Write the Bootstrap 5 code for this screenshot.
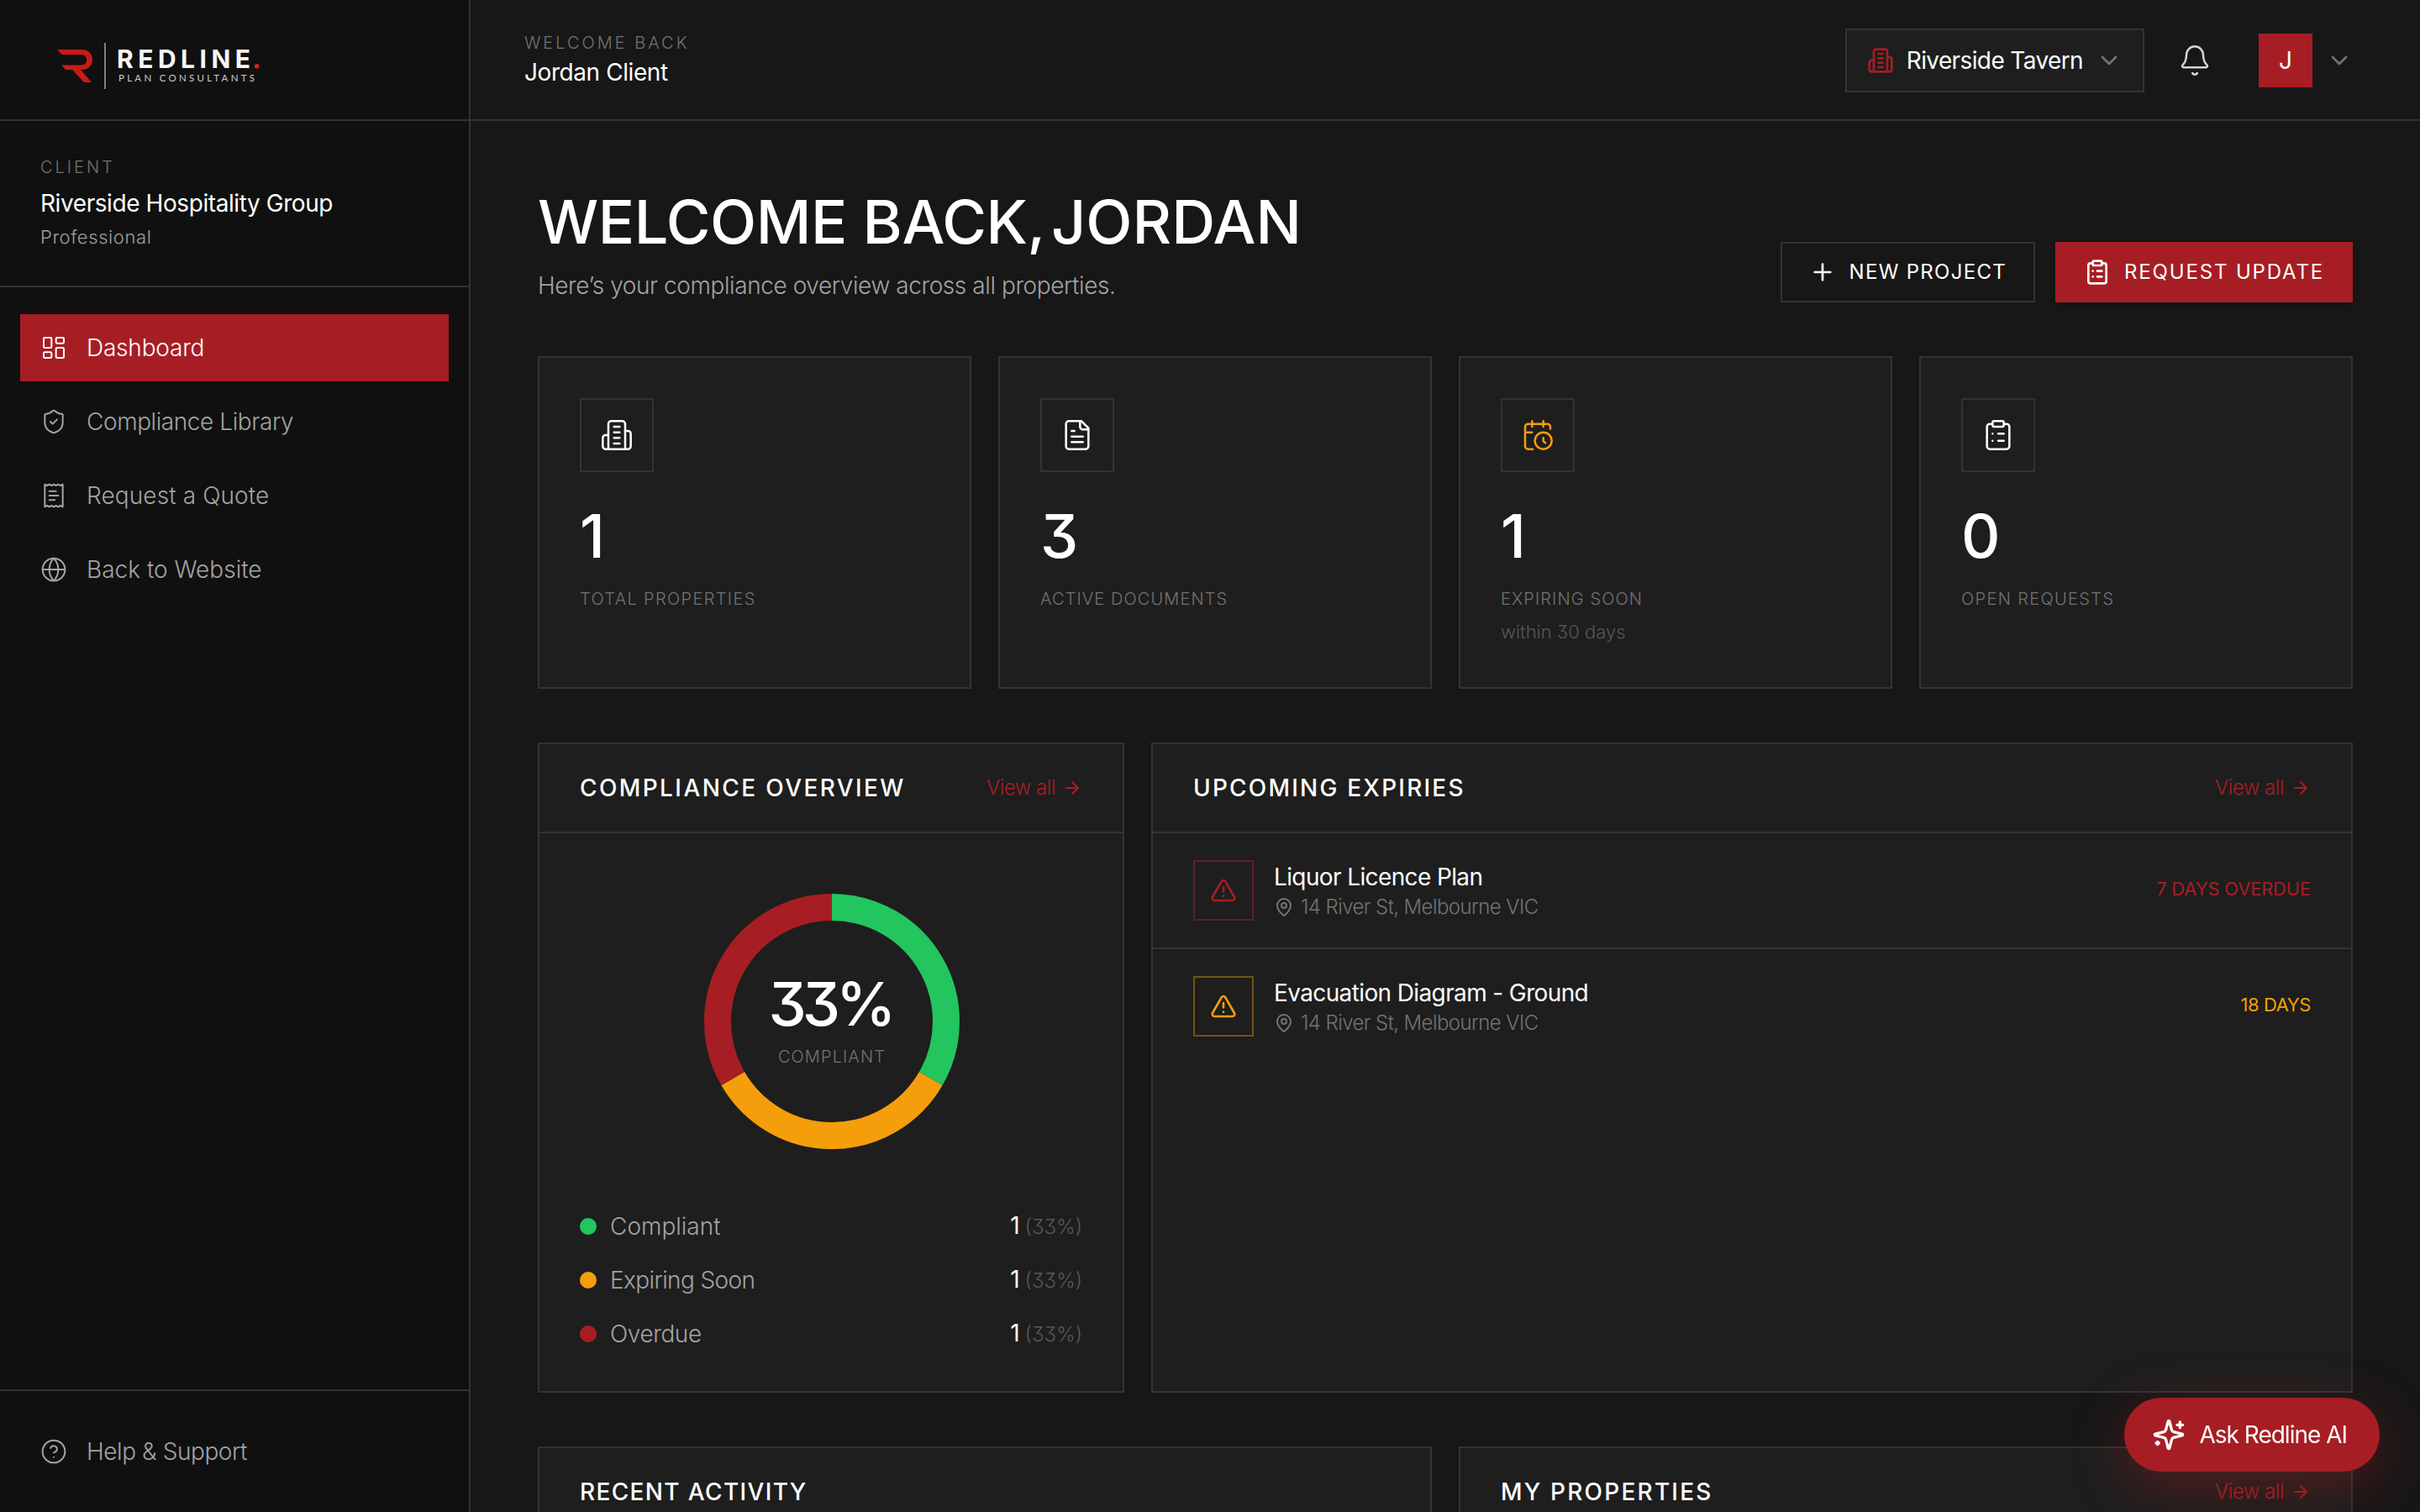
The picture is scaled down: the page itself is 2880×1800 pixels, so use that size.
<!DOCTYPE html>
<html lang="en">
<head>
    <meta charset="UTF-8">
    <meta name="viewport" content="width=device-width, initial-scale=1.0">
    <title>Redline Plan Consultants - Dashboard</title>
    <link href="https://cdn.jsdelivr.net/npm/bootstrap@5.3.0/dist/css/bootstrap.min.css" rel="stylesheet">
    <style>
        :root {
            --red: #a61e24;
            --amber: #f59e0b;
            --green: #22c55e;
            --line: #333;
            --panel: #1e1e1e;
        }
        body {
            background: #171717;
            color: #fff;
            font-family: Inter, "Open Sans", sans-serif;
            font-feature-settings: "cv09";
            font-size: 28px;
            line-height: 40px;
            font-weight: 300;
            overflow: hidden;
        }
        .app { height: 1800px; }
        svg.ico {
            width: 32px; height: 32px; flex: none;
            fill: none; stroke: currentColor; stroke-width: 1.5;
            stroke-linecap: round; stroke-linejoin: round;
        }
        svg.ico-lg { width: 40px; height: 40px; }
        svg.ico-sm { width: 24px; height: 24px; }
        svg.bold { stroke-width: 2; }
        .c-red { color: var(--red); }
        .c-amber { color: var(--amber); }
        .c-dim { color: #737373; }

        /* tracking */
        .tk-a { letter-spacing: -.62px; }
        .tk-b { letter-spacing: -.42px; }
        .tk-c { letter-spacing: -.2px; }
        .tk-d { letter-spacing: .1px; }
        .tk-e { letter-spacing: .6px; }
        .tk-f { letter-spacing: 1.1px; }
        .tk-g { letter-spacing: 1.35px; }
        .tk-h { letter-spacing: 1.83px; }
        .tk-i { letter-spacing: 2.2px; }
        .tk-j { letter-spacing: 2.4px; }

        .sidebar { width: 560px; flex: none; background: #101010; border-right: 2px solid var(--line); }
        .brand { height: 144px; padding: 0 48px; border-bottom: 2px solid var(--line); }
        .client { padding: 40px 48px; border-bottom: 2px solid var(--line); }
        .eyebrow { font-size: 20px; line-height: 30px; letter-spacing: 3px; color: #737373; text-transform: uppercase; }
        .client-plan { font-size: 22px; line-height: 36px; color: #a0a0a0; margin-top: 2px; }
        .side-nav { padding: 32px 24px; gap: 8px; }
        .side-link { height: 80px; padding: 0 24px; gap: 23px; color: #a3a3a3; text-decoration: none; }
        .side-link.active { background: var(--red); color: #fff; }
        .side-foot { padding: 32px 24px; border-top: 2px solid var(--line); }

        .topbar { height: 144px; padding: 0 80px 0 64px; border-bottom: 2px solid var(--line); }
        .top-tools { padding-top: 2px; }
        .site-select { height: 76px; padding: 0 24px; gap: 15px; background: var(--panel); border: 2px solid var(--line); }
        .bell { margin: 0 56px 0 40px; color: #d4d4d4; }
        .avatar { width: 64px; height: 64px; background: var(--red); }

        .content { padding: 80px 80px 0; }
        .disp { font-weight: 500; color: #fff; }
        .page-title { font-size: 72px; line-height: 80px; letter-spacing: -.5px; }
        .page-title span { margin-left: -11px; letter-spacing: 0; }
        .page-sub { margin-top: 16px; color: #a3a3a3; }
        .act { height: 72px; padding: 0 32px; gap: 16px; font-size: 24px; border: 2px solid var(--line); border-radius: 0; color: #fff; font-weight: 400; text-transform: uppercase; }
        .act-red { background: var(--red); border-color: var(--red); box-shadow: 0 2px 6px rgba(0, 0, 0, .3); }
        .act .tk-n { letter-spacing: 1.3px; }

        .grid-row { --bs-gutter-x: 32px; margin-top: 64px; }
        .col-overview { flex: 0 0 730px; }
        .panel { background: var(--panel); border: 2px solid var(--line); }
        .stat { padding: 48px; height: 396px; }
        .stat-ico { width: 88px; height: 88px; border: 2px solid var(--line); }
        .stat-num { font-size: 72px; line-height: 72px; margin-top: 40px; }
        .stat-label { font-size: 20px; line-height: 30px; margin-top: 24px; color: #737373; text-transform: uppercase; }
        .stat-note { font-size: 22px; line-height: 36px; margin-top: 6px; color: #575757; }
        .panel-head { height: 106px; padding: 0 48px; border-bottom: 2px solid var(--line); }
        .panel-title { font-size: 28px; line-height: 40px; text-transform: uppercase; }
        .view-all { font-size: 24px; gap: 8px; color: var(--red); text-decoration: none; letter-spacing: -.5px; }
        .mid-panel { height: 774px; }

        .donut { width: 320px; height: 320px; margin: 64px 186px 64px 188px; position: relative; }
        .donut-text { position: absolute; inset: 0; }
        .donut-text .stat-num { letter-spacing: -5px; padding-right: 4px; }
        .donut-text .stat-label { margin-top: 12px; }
        .legend-list { padding: 0 48px; gap: 24px; color: #a3a3a3; }
        .legend-list > div { height: 40px; }
        .dot { width: 20px; height: 20px; border-radius: 50%; }
        .pct { font-size: 24px; color: #575757; margin-left: -2px; }

        .expiry { padding: 32px 48px; gap: 24px; height: 136px; }
        .expiry + .expiry { border-top: 2px solid var(--line); height: 138px; }
        .expiry-ico { width: 72px; height: 72px; border: 2px solid; }
        .is-over { color: var(--red); border-color: rgba(166, 30, 36, .5); }
        .is-soon { color: var(--amber); border-color: rgba(245, 158, 11, .4); }
        .expiry-addr { font-size: 24px; line-height: 32px; gap: 8px; color: #737373; letter-spacing: -.58px; }
        .expiry-due { font-size: 22px; font-weight: 400; text-transform: uppercase; padding-bottom: 4px; }

        .ask-btn {
            position: fixed; right: 48px; bottom: 48px; height: 88px; padding: 0 38px 0 32px; gap: 16px;
            border-radius: 44px; background: var(--red); color: #fff; font-size: 28px; line-height: 40px; font-weight: 400;
            letter-spacing: -1px;
            box-shadow: 0 16px 64px rgba(166, 30, 36, .4);
        }
    </style>
</head>
<body>
    <!-- icon set -->
    <svg class="d-none">
        <symbol id="i-dash" viewBox="0 0 24 24"><rect x="3" y="3" width="7" height="9" rx="1"/><rect x="14" y="3" width="7" height="5" rx="1"/><rect x="14" y="12" width="7" height="9" rx="1"/><rect x="3" y="16" width="7" height="5" rx="1"/></symbol>
        <symbol id="i-shield" viewBox="0 0 24 24"><path d="M20 13c0 5-3.5 7.5-7.66 8.95a1 1 0 0 1-.67-.01C7.5 20.5 4 18 4 13V6a1 1 0 0 1 1-1c2 0 4.5-1.2 6.24-2.72a1.17 1.17 0 0 1 1.52 0C14.51 3.81 17 5 19 5a1 1 0 0 1 1 1z"/><path d="m9 12 2 2 4-4"/></symbol>
        <symbol id="i-receipt" viewBox="0 0 24 24"><path d="M4 2v20l2-1 2 1 2-1 2 1 2-1 2 1 2-1 2 1V2l-2 1-2-1-2 1-2-1-2 1-2-1-2 1Z"/><path d="M14 8H8M16 12H8M13 16H8"/></symbol>
        <symbol id="i-globe" viewBox="0 0 24 24"><circle cx="12" cy="12" r="10"/><path d="M12 2a14.5 14.5 0 0 0 0 20 14.5 14.5 0 0 0 0-20M2 12h20"/></symbol>
        <symbol id="i-help" viewBox="0 0 24 24"><circle cx="12" cy="12" r="10"/><path d="M9.09 9a3 3 0 0 1 5.83 1c0 2-3 3-3 3M12 17h.01"/></symbol>
        <symbol id="i-building" viewBox="0 0 24 24"><path d="M6 22V4a2 2 0 0 1 2-2h8a2 2 0 0 1 2 2v18Z"/><path d="M6 12H4a2 2 0 0 0-2 2v6a2 2 0 0 0 2 2h2M18 9h2a2 2 0 0 1 2 2v9a2 2 0 0 1-2 2h-2M10 6h4M10 10h4M10 14h4M10 18h4"/></symbol>
        <symbol id="i-file" viewBox="0 0 24 24"><path d="M15 2H6a2 2 0 0 0-2 2v16a2 2 0 0 0 2 2h12a2 2 0 0 0 2-2V7Z"/><path d="M14 2v4a2 2 0 0 0 2 2h4M10 9H8M16 13H8M16 17H8"/></symbol>
        <symbol id="i-calclock" viewBox="0 0 24 24"><path d="M21 7.5V6a2 2 0 0 0-2-2H5a2 2 0 0 0-2 2v14a2 2 0 0 0 2 2h3.5M16 2v4M8 2v4M3 10h5M17.5 17.5 16 16.3V14"/><circle cx="16" cy="16" r="6"/></symbol>
        <symbol id="i-clip" viewBox="0 0 24 24"><rect x="8" y="2" width="8" height="4" rx="1"/><path d="M16 4h2a2 2 0 0 1 2 2v14a2 2 0 0 1-2 2H6a2 2 0 0 1-2-2V6a2 2 0 0 1 2-2h2M12 11h4M12 16h4M8 11h.01M8 16h.01"/></symbol>
        <symbol id="i-bell" viewBox="0 0 24 24"><path d="M10.268 21a2 2 0 0 0 3.464 0M3.262 15.326A1 1 0 0 0 4 17h16a1 1 0 0 0 .74-1.673C19.41 13.956 18 12.499 18 8A6 6 0 0 0 6 8c0 4.499-1.411 5.956-2.738 7.326"/></symbol>
        <symbol id="i-down" viewBox="0 0 24 24"><path d="m6 9 6 6 6-6"/></symbol>
        <symbol id="i-plus" viewBox="0 0 24 24"><path d="M5 12h14M12 5v14"/></symbol>
        <symbol id="i-arrow" viewBox="0 0 24 24"><path d="M5 12h14M12 5l7 7-7 7"/></symbol>
        <symbol id="i-alert" viewBox="0 0 24 24"><path d="m21.73 18-8-14a2 2 0 0 0-3.48 0l-8 14A2 2 0 0 0 4 21h16a2 2 0 0 0 1.73-3M12 9v4M12 17h.01"/></symbol>
        <symbol id="i-pin" viewBox="0 0 24 24"><path d="M20 10c0 4.993-5.539 10.193-7.399 11.799a1 1 0 0 1-1.202 0C9.539 20.193 4 14.993 4 10a8 8 0 0 1 16 0"/><circle cx="12" cy="10" r="3"/></symbol>
        <symbol id="i-spark" viewBox="0 0 24 24"><path d="M9.937 15.5A2 2 0 0 0 8.5 14.063l-6.135-1.582a.5.5 0 0 1 0-.962L8.5 9.936A2 2 0 0 0 9.937 8.5l1.582-6.135a.5.5 0 0 1 .963 0L14.063 8.5A2 2 0 0 0 15.5 9.937l6.135 1.581a.5.5 0 0 1 0 .964L15.5 14.063a2 2 0 0 0-1.437 1.437l-1.582 6.135a.5.5 0 0 1-.963 0zM20 3v4M22 5h-4M4 17v2M5 18H3"/></symbol>
    </svg>

    <div class="app d-flex">
        <aside class="sidebar d-flex flex-column">
            <div class="brand d-flex align-items-center">
                <svg width="280" height="80" viewBox="0 0 280 80">
                    <path fill="#cc1a17" d="M20 28h30a12 12 0 0 1 0 24H30l-5-5.500h24a6.200 6.200 0 0 0 0-12.500H26z"/>
                    <path fill="#cc1a17" d="M38 52h10l13 15h-9z"/>
                    <path stroke="#808080" stroke-width="2" d="M77 20v55"/>
                    <text x="91" y="49.500" font-family="Inter" font-weight="700" font-size="30" fill="#f5f5f5" textLength="159">REDLINE</text>
                    <circle cx="257.700" cy="47.700" r="2.800" fill="#d9201c"/>
                    <text x="93" y="66" font-family="Lato" font-weight="400" font-size="11.500" fill="#ccc" textLength="162">PLAN CONSULTANTS</text>
                </svg>
            </div>
            <div class="client">
                <div class="eyebrow">Client</div>
                <div class="fw-normal mt-2 tk-b">Riverside Hospitality Group</div>
                <div class="client-plan tk-e">Professional</div>
            </div>
            <nav class="side-nav d-flex flex-column flex-grow-1">
                <a href="#" class="side-link active d-flex align-items-center"><svg class="ico"><use href="#i-dash"/></svg><span class="tk-c">Dashboard</span></a>
                <a href="#" class="side-link d-flex align-items-center"><svg class="ico"><use href="#i-shield"/></svg><span class="tk-b">Compliance Library</span></a>
                <a href="#" class="side-link d-flex align-items-center"><svg class="ico"><use href="#i-receipt"/></svg><span class="tk-d">Request a Quote</span></a>
                <a href="#" class="side-link d-flex align-items-center"><svg class="ico"><use href="#i-globe"/></svg><span>Back to Website</span></a>
            </nav>
            <div class="side-foot">
                <a href="#" class="side-link d-flex align-items-center"><svg class="ico"><use href="#i-help"/></svg><span class="tk-b">Help &amp; Support</span></a>
            </div>
        </aside>

        <div class="flex-grow-1 overflow-hidden">
            <header class="topbar d-flex align-items-center justify-content-between">
                <div>
                    <div class="eyebrow">Welcome back</div>
                    <div class="fw-normal tk-b">Jordan Client</div>
                </div>
                <div class="top-tools d-flex align-items-center">
                    <div class="site-select d-flex align-items-center fw-normal">
                        <svg class="ico bold c-red"><use href="#i-building"/></svg>
                        <span class="tk-a">Riverside Tavern</span>
                        <svg class="ico bold c-dim"><use href="#i-down"/></svg>
                    </div>
                    <svg class="ico ico-lg bell"><use href="#i-bell"/></svg>
                    <div class="avatar d-flex align-items-center justify-content-center fw-normal">J</div>
                    <svg class="ico bold ms-3 c-dim"><use href="#i-down"/></svg>
                </div>
            </header>

            <main class="content">
                <div class="d-flex justify-content-between align-items-end">
                    <div>
                        <h1 class="disp page-title mb-0">WELCOME BACK, <span>JORDAN</span></h1>
                        <div class="page-sub tk-b">Here’s your compliance overview across all properties.</div>
                    </div>
                    <div class="d-flex gap-4">
                        <button class="btn act d-flex align-items-center"><svg class="ico bold"><use href="#i-plus"/></svg><span class="tk-n">New Project</span></button>
                        <button class="btn act act-red d-flex align-items-center"><svg class="ico bold"><use href="#i-clip"/></svg><span class="tk-h">Request Update</span></button>
                    </div>
                </div>

                <div class="row grid-row">
                    <div class="col-3"><div class="panel stat">
                        <div class="stat-ico d-flex align-items-center justify-content-center"><svg class="ico ico-lg"><use href="#i-building"/></svg></div>
                        <div class="disp stat-num">1</div>
                        <div class="stat-label tk-g">Total Properties</div>
                    </div></div>
                    <div class="col-3"><div class="panel stat">
                        <div class="stat-ico d-flex align-items-center justify-content-center"><svg class="ico ico-lg"><use href="#i-file"/></svg></div>
                        <div class="disp stat-num">3</div>
                        <div class="stat-label tk-f">Active Documents</div>
                    </div></div>
                    <div class="col-3"><div class="panel stat">
                        <div class="stat-ico d-flex align-items-center justify-content-center"><svg class="ico ico-lg c-amber"><use href="#i-calclock"/></svg></div>
                        <div class="disp stat-num">1</div>
                        <div class="stat-label tk-f">Expiring Soon</div>
                        <div class="stat-note">within 30 days</div>
                    </div></div>
                    <div class="col-3"><div class="panel stat">
                        <div class="stat-ico d-flex align-items-center justify-content-center"><svg class="ico ico-lg"><use href="#i-clip"/></svg></div>
                        <div class="disp stat-num">0</div>
                        <div class="stat-label tk-g">Open Requests</div>
                    </div></div>
                </div>

                <div class="row grid-row">
                    <div class="col-overview"><div class="panel mid-panel">
                        <div class="panel-head d-flex align-items-center justify-content-between">
                            <h2 class="disp panel-title mb-0 tk-j">Compliance Overview</h2>
                            <a href="#" class="view-all d-flex align-items-center"><span>View all</span><svg class="ico ico-sm bold"><use href="#i-arrow"/></svg></a>
                        </div>
                        <div class="donut">
                            <svg width="320" height="320" viewBox="0 0 320 320" fill="none" stroke-width="32">
                                <path stroke="#22c55e" d="M160 24A136 136 0 0 1 277.780 228"/>
                                <path stroke="#f59e0b" d="M277.780 228A136 136 0 0 1 42.220 228"/>
                                <path stroke="#a61e24" d="M42.220 228A136 136 0 0 1 160 24"/>
                            </svg>
                            <div class="donut-text d-flex flex-column align-items-center justify-content-center">
                                <div class="disp stat-num mt-0">33%</div>
                                <div class="stat-label tk-f">Compliant</div>
                            </div>
                        </div>
                        <div class="legend-list d-flex flex-column">
                            <div class="d-flex align-items-center gap-3"><span class="dot" style="background: #22c55e"></span><span>Compliant</span><span class="ms-auto"><span class="text-white fw-normal">1</span> <span class="pct">(33%)</span></span></div>
                            <div class="d-flex align-items-center gap-3"><span class="dot" style="background: #f59e0b"></span><span class="tk-a">Expiring Soon</span><span class="ms-auto"><span class="text-white fw-normal">1</span> <span class="pct">(33%)</span></span></div>
                            <div class="d-flex align-items-center gap-3"><span class="dot" style="background: #a61e24"></span><span class="tk-b">Overdue</span><span class="ms-auto"><span class="text-white fw-normal">1</span> <span class="pct">(33%)</span></span></div>
                        </div>
                    </div></div>
                    <div class="col"><div class="panel mid-panel">
                        <div class="panel-head d-flex align-items-center justify-content-between">
                            <h2 class="disp panel-title mb-0 tk-i">Upcoming Expiries</h2>
                            <a href="#" class="view-all d-flex align-items-center"><span>View all</span><svg class="ico ico-sm bold"><use href="#i-arrow"/></svg></a>
                        </div>
                        <div class="expiry d-flex align-items-center">
                            <div class="expiry-ico is-over d-flex align-items-center justify-content-center"><svg class="ico bold"><use href="#i-alert"/></svg></div>
                            <div class="flex-grow-1">
                                <div class="fw-normal tk-a">Liquor Licence Plan</div>
                                <div class="expiry-addr d-flex align-items-center"><svg class="ico ico-sm bold"><use href="#i-pin"/></svg><span>14 River St, Melbourne VIC</span></div>
                            </div>
                            <div class="expiry-due is-over tk-c">7 days overdue</div>
                        </div>
                        <div class="expiry d-flex align-items-center">
                            <div class="expiry-ico is-soon d-flex align-items-center justify-content-center"><svg class="ico bold"><use href="#i-alert"/></svg></div>
                            <div class="flex-grow-1">
                                <div class="fw-normal tk-a">Evacuation Diagram - Ground</div>
                                <div class="expiry-addr d-flex align-items-center"><svg class="ico ico-sm bold"><use href="#i-pin"/></svg><span>14 River St, Melbourne VIC</span></div>
                            </div>
                            <div class="expiry-due is-soon tk-b">18 days</div>
                        </div>
                    </div></div>
                </div>

                <div class="row grid-row">
                    <div class="col-6"><div class="panel">
                        <div class="panel-head d-flex align-items-center"><h2 class="disp panel-title mb-0 tk-g">Recent Activity</h2></div>
                    </div></div>
                    <div class="col-6"><div class="panel">
                        <div class="panel-head d-flex align-items-center justify-content-between">
                            <h2 class="disp panel-title mb-0 tk-i">My Properties</h2>
                            <a href="#" class="view-all d-flex align-items-center"><span>View all</span><svg class="ico ico-sm bold"><use href="#i-arrow"/></svg></a>
                        </div>
                    </div></div>
                </div>
            </main>
        </div>
    </div>

    <button class="btn ask-btn d-flex align-items-center"><svg class="ico ico-lg bold"><use href="#i-spark"/></svg><span>Ask Redline AI</span></button>
    <script src="https://cdn.jsdelivr.net/npm/bootstrap@5.3.0/dist/js/bootstrap.bundle.min.js"></script>
</body>
</html>
